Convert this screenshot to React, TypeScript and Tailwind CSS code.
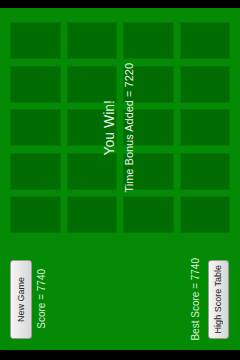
import React from 'react';

const tiles = Array.from({ length: 20 }, (_, i) => i);

// vertical text, read bottom to top
const vText = '[writing-mode:vertical-rl] rotate-180 whitespace-nowrap leading-none';

export default function App() {
  return (
    <div
      className="w-[240px] h-[360px] bg-black flex flex-col"
      style={{ fontFamily: '"Liberation Sans", Arial, sans-serif' }}
    >
      <div className="h-[8px] shrink-0" />

      <div className="relative h-[342px] bg-[#048a04] flex flex-col">
        {/* tile board */}
        <div className="pt-[14px] px-[10px] grid grid-cols-4 gap-x-[6px] gap-y-[6.5px]">
          {tiles.map((t) => (
            <div key={t} className="h-[37px] bg-[#016c01] border border-[#037a03]" />
          ))}
        </div>

        {/* win message */}
        <div className="absolute left-0 right-0 top-[14px] h-[211px] flex items-center justify-center gap-[8px] pr-[4px]">
          <span className={`${vText} text-[14px] text-[#e4f4e4]`}>You Win!</span>
          <span className={`${vText} text-[11px] text-[#e4f4e4]`}>Time Bonus Added = 7220</span>
        </div>

        {/* bottom controls */}
        <div className="mt-[25px] pl-[10px] pr-[11px] flex items-center justify-between">
          <div className="flex items-center gap-[5px]">
            <button className="w-[22px] h-[79px] rounded-[3px] border border-[#9a9a9a] bg-gradient-to-r from-[#f6f6f6] to-[#d6d6d6] flex items-center justify-center">
              <span className={`${vText} text-[9px] text-[#222]`}>New Game</span>
            </button>
            <span className={`${vText} text-[10px] text-[#dcefdc]`}>Score = 7740</span>
          </div>
          <div className="flex items-center gap-[7px]">
            <span className={`${vText} text-[10px] text-[#dcefdc]`}>Best Score = 7740</span>
            <button className="w-[21px] h-[79px] rounded-[3px] border border-[#9a9a9a] bg-gradient-to-r from-[#f6f6f6] to-[#d6d6d6] flex items-center justify-center">
              <span className={`${vText} text-[9px] text-[#222]`}>High Score Table</span>
            </button>
          </div>
        </div>
      </div>

      <div className="h-[10px] shrink-0" />
    </div>
  );
}
